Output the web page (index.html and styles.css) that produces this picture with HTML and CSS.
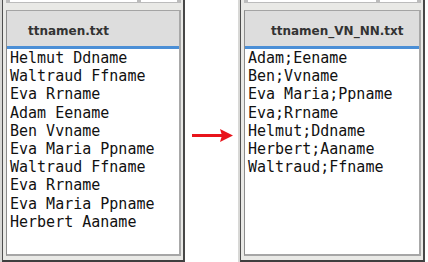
FILE: index.html
```html
<!DOCTYPE html>
<html lang="en">
<head>
    <meta charset="UTF-8">
    <title>ttnamen</title>
    <link rel="stylesheet" href="styles.css">
</head>
<body>
    <div class="win win-left">
        <div class="frame">
            <div class="tabs"><span class="tab tab-wide"></span><span class="tab"></span></div>
            <div class="pane">
                <div class="head head-left">ttnamen.txt</div>
                <div class="lines">Helmut Ddname
Waltraud Ffname
Eva Rrname
Adam Eename
Ben Vvname
Eva Maria Ppname
Waltraud Ffname
Eva Rrname
Eva Maria Ppname
Herbert Aaname</div>
            </div>
        </div>
    </div>

    <div class="arrow">
        <svg width="42" height="13" viewBox="0 0 42 13">
            <rect x="0" y="5" width="30" height="3" fill="#e8141b"/>
            <polygon points="28,0 41,6.5 28,13 30,6.5" fill="#e8141b"/>
        </svg>
    </div>

    <div class="win win-right">
        <div class="frame">
            <div class="tabs"><span class="tab tab-wide"></span><span class="tab"></span></div>
            <div class="pane">
                <div class="head head-right">ttnamen_VN_NN.txt</div>
                <div class="lines">Adam;Eename
Ben;Vvname
Eva Maria;Ppname
Eva;Rrname
Helmut;Ddname
Herbert;Aaname
Waltraud;Ffname</div>
            </div>
        </div>
    </div>
</body>
</html>
```

FILE: styles.css
```css
* {
    margin: 0;
    padding: 0;
    box-sizing: border-box;
}

body {
    background: #ffffff;
    display: flex;
    height: 262px;
    overflow: hidden;
}

/* window frame */
.win {
    height: 262px;
    border-left: 2px solid #d8d8d6;
}

.win-left {
    width: 185px;
}

.win-right {
    width: 187px;
}

.frame {
    height: 100%;
    display: flex;
    flex-direction: column;
    background: #e9e9e6;
    border-left: 1px solid #4e4e4e;
    border-right: 2px solid #474747;
    border-bottom: 2px solid #3f3f3f;
    padding: 0 2px 4px 3px;
}

.tabs {
    height: 3px;
    margin-bottom: 7px;
    background: #bcbcbc;
    display: flex;
    gap: 4px;
    padding: 0 4px 1px 4px;
}

.tab {
    flex: 1;
    background: #ffffff;
}

.tab-wide {
    flex: 3.5;
}

.pane {
    flex: 1;
    display: flex;
    flex-direction: column;
    background: #ffffff;
    border-top: 1px solid #a4a4a4;
    border-left: 1px solid #8c8c8c;
    border-right: 2px solid #a8a8a8;
    border-bottom: 2px solid #a6a6a6;
}

/* column header */
.head {
    height: 38px;
    padding-top: 12px;
    background: #dddddd;
    border-bottom: 3px solid #4b8fd6;
    font-family: "DejaVu Sans", sans-serif;
    font-weight: bold;
    font-size: 12px;
    line-height: 16px;
    color: #333333;
}

.head-left {
    padding-left: 21px;
}

.head-right {
    padding-left: 26px;
}

.lines {
    padding: 0 0 0 3px;
    font-family: "DejaVu Sans Mono", monospace;
    font-size: 15px;
    line-height: 18.2px;
    color: #111111;
    white-space: pre;
}

/* arrow between the two lists */
.arrow {
    width: 53px;
    display: flex;
    align-items: center;
    padding: 8px 0 0 7px;
}

.arrow svg {
    display: block;
}
```
